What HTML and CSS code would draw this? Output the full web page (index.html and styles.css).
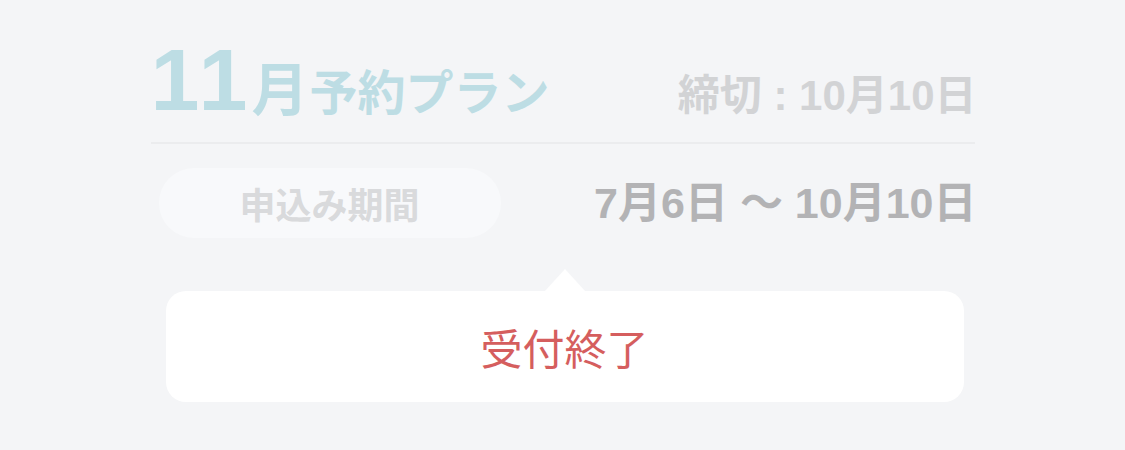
FILE: index.html
```html
<!DOCTYPE html>
<html lang="ja">
<head>
    <meta charset="UTF-8">
    <meta name="viewport" content="width=device-width, initial-scale=1.0">
    <title>11月予約プラン</title>
    <link rel="stylesheet" href="styles.css">
</head>
<body>
    <div class="plan">
        <div class="plan-header">
            <h1 class="plan-title">
                <span class="month-num">11</span><span class="month-unit">月</span><span class="plan-name">予約プラン</span>
            </h1>
            <div class="deadline">締切 : 10月10日</div>
        </div>

        <div class="period-row">
            <div class="period-label">申込み期間</div>
            <div class="period-dates">7月6日 〜 10月10日</div>
        </div>

        <div class="status-box">
            <div class="status-text">受付終了</div>
        </div>
    </div>
</body>
</html>
```

FILE: styles.css
```css
body {
    margin: 0;
    background-color: #f4f5f7;
    font-family: "Liberation Sans", "Noto Sans CJK JP", sans-serif;
}
.plan {
    width: 824px;
    margin: 0 auto;
    padding-top: 36px;
}
.plan-header {
    display: flex;
    justify-content: space-between;
    align-items: baseline;
    padding-bottom: 18px;
    border-bottom: 2px solid #ebecee;
}
.plan-title {
    margin: 0;
    font-weight: bold;
    color: #bddde4;
    line-height: 1;
}
.month-num {
    font-size: 88px;
    letter-spacing: 4px;
}
.month-unit {
    font-size: 57px;
}
.plan-name {
    font-size: 48px;
    margin-left: 1px;
}
.deadline {
    font-size: 42px;
    font-weight: bold;
    color: #d2d3d5;
    margin-right: -2px;
}
.period-row {
    display: flex;
    justify-content: space-between;
    align-items: center;
    margin-top: 24px;
    padding-left: 8px;
}
.period-label {
    width: 342px;
    height: 70px;
    border-radius: 35px;
    background-color: #f8f9fb;
    display: flex;
    align-items: center;
    justify-content: center;
    font-size: 36px;
    font-weight: bold;
    color: #d9dadc;
}
.period-dates {
    font-size: 43px;
    font-weight: bold;
    color: #b3b3b5;
    margin-right: -2px;
    padding-bottom: 8px;
}
.status-box {
    position: relative;
    margin: 53px 11px 0 15px;
    height: 111px;
    border-radius: 20px;
    background-color: #fff;
    display: flex;
    align-items: center;
    justify-content: center;
}
.status-box::before {
    content: "";
    position: absolute;
    top: -22px;
    left: 50%;
    margin-left: -21px;
    border-left: 21px solid transparent;
    border-right: 21px solid transparent;
    border-bottom: 23px solid #fff;
}
.status-text {
    font-size: 42px;
    color: #d55e5e;
}
```
